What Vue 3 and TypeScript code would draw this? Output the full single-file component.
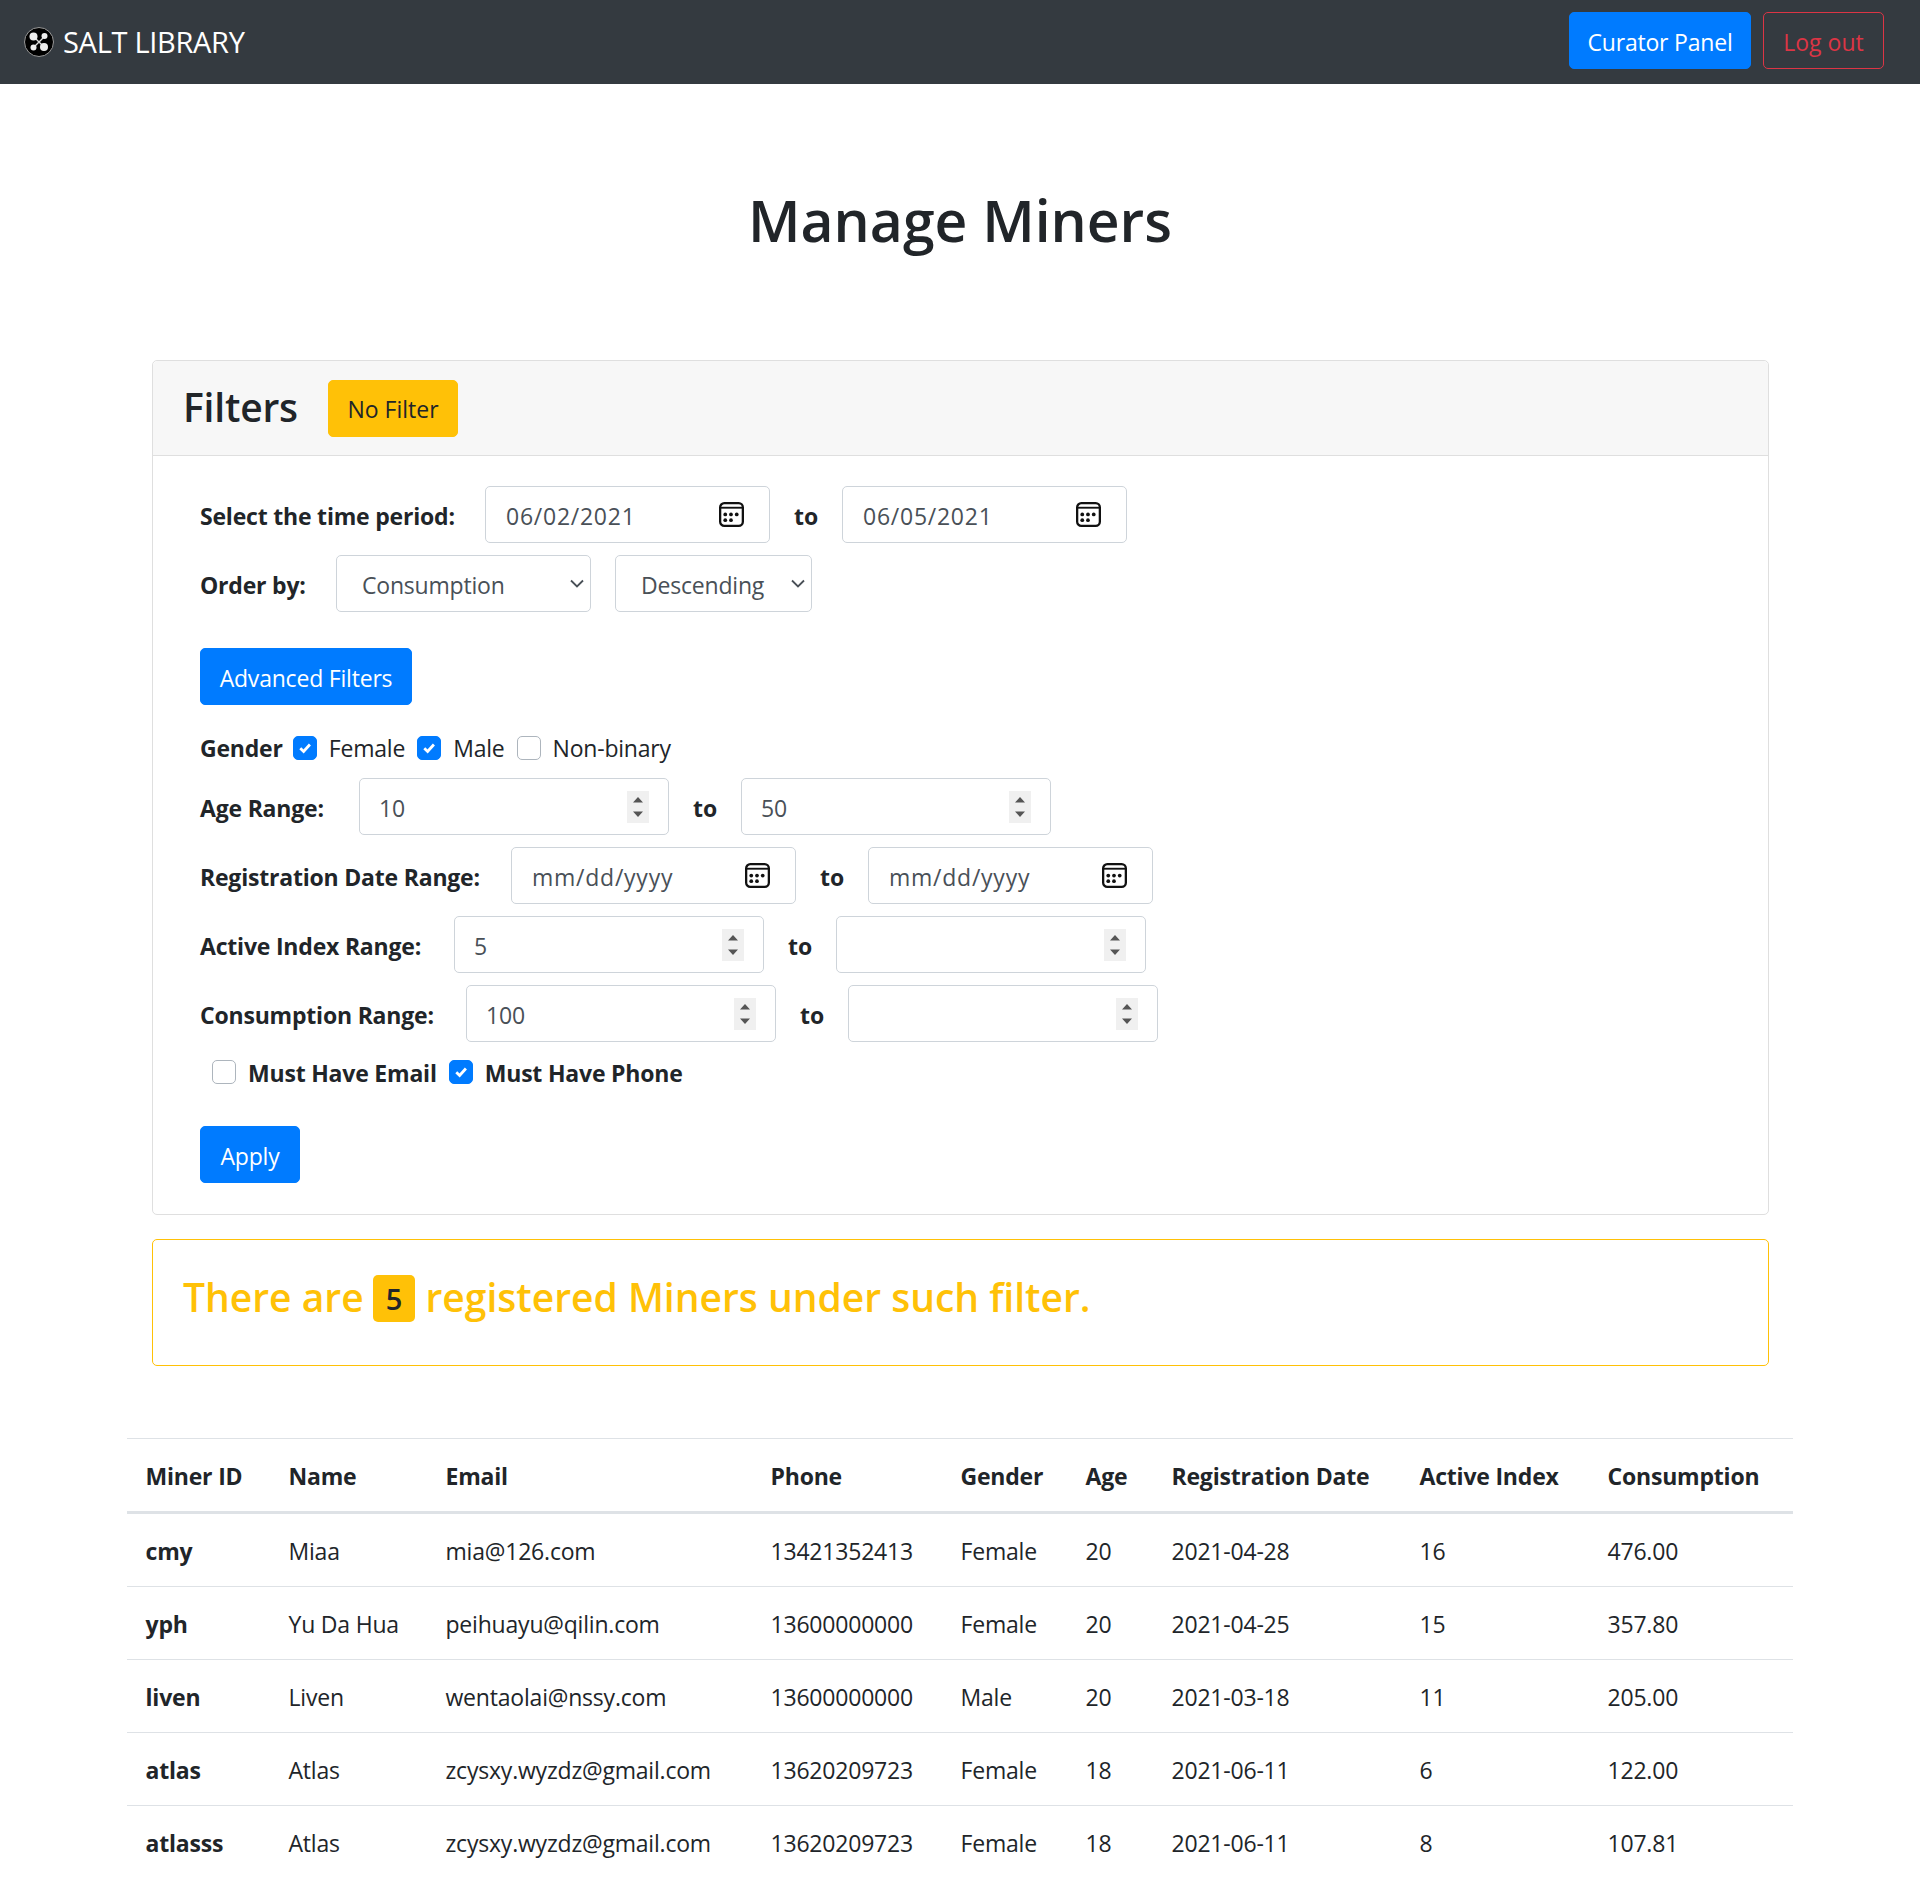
<script setup lang="ts">
interface Miner { id: string; name: string; email: string; phone: string; gender: string; age: number; date: string; active: number; consumption: string }
const miners: Miner[] = [
  { id: 'cmy', name: 'Miaa', email: 'mia@126.com', phone: '13421352413', gender: 'Female', age: 20, date: '2021-04-28', active: 16, consumption: '476.00' },
  { id: 'yph', name: 'Yu Da Hua', email: 'peihuayu@qilin.com', phone: '13600000000', gender: 'Female', age: 20, date: '2021-04-25', active: 15, consumption: '357.80' },
  { id: 'liven', name: 'Liven', email: 'wentaolai@nssy.com', phone: '13600000000', gender: 'Male', age: 20, date: '2021-03-18', active: 11, consumption: '205.00' },
  { id: 'atlas', name: 'Atlas', email: 'zcysxy.wyzdz@gmail.com', phone: '13620209723', gender: 'Female', age: 18, date: '2021-06-11', active: 6, consumption: '122.00' },
  { id: 'atlasss', name: 'Atlas', email: 'zcysxy.wyzdz@gmail.com', phone: '13620209723', gender: 'Female', age: 18, date: '2021-06-11', active: 8, consumption: '107.81' },
]
const headers = ['Miner ID', 'Name', 'Email', 'Phone', 'Gender', 'Age', 'Registration Date', 'Active Index', 'Consumption']
const colWidths = [143, 157, 325, 190, 125, 86, 248, 188, 204]
const rangesBeforeDate = [{ label: 'Age Range:', width: 135, from: '10', to: '50' }]
const rangesAfterDate = [
  { label: 'Active Index Range:', width: 230, from: '5', to: '' },
  { label: 'Consumption Range:', width: 242, from: '100', to: '' },
]
</script>

<template>
  <div class="page">
    <svg class="defs" width="0" height="0" aria-hidden="true">
      <symbol id="cal" viewBox="0 0 24 24">
        <rect x="1.1" y="1.1" width="21.8" height="21.8" rx="4" fill="none" stroke="#111" stroke-width="2.2" />
        <path d="M1 5.5H23" stroke="#111" stroke-width="1.8" />
        <g fill="#111">
          <circle cx="6" cy="12" r="1.8" /><circle cx="11.5" cy="12" r="1.8" /><circle cx="17" cy="12" r="1.8" />
          <circle cx="6" cy="17.5" r="1.8" /><circle cx="11.5" cy="17.5" r="1.8" />
        </g>
      </symbol>
      <symbol id="spin" viewBox="0 0 22 32">
        <rect width="22" height="32" fill="#f0f0f0" />
        <path d="M6 11.5L11 6L16 11.5Z M6 20.5L11 26L16 20.5Z" fill="#555" />
      </symbol>
      <symbol id="chev" viewBox="0 0 14 9">
        <path d="M1 1.5L7 7.5L13 1.5" fill="none" stroke="#495057" stroke-width="1.8" />
      </symbol>
      <symbol id="tick" viewBox="0 0 8 8">
        <path d="M1.3 4.2L3.2 6L6.8 2" fill="none" stroke="#fff" stroke-width="1.6" />
      </symbol>
    </svg>

    <nav class="navbar">
      <a class="brand">
        <svg class="logo" viewBox="0 0 30 30" width="30" height="30">
          <circle cx="15" cy="15" r="14.5" fill="#000" stroke="#999" stroke-width="1" />
          <path d="M9 9 L21 21 M21 9 L9 21" stroke="#ddd" stroke-width="1.4" />
          <circle cx="9.5" cy="9.5" r="4" fill="#eee" />
          <circle cx="20.5" cy="9" r="3" fill="#eee" />
          <circle cx="9.5" cy="20.5" r="3" fill="#eee" />
          <circle cx="20" cy="20" r="4" fill="#eee" />
        </svg>
        <span>SALT LIBRARY</span>
      </a>
      <div class="nav-actions">
        <button class="btn primary curator">Curator Panel</button>
        <button class="btn outline-danger logout">Log out</button>
      </div>
    </nav>

    <h1 class="title">Manage Miners</h1>

    <main class="container">
      <section class="card">
        <header class="card-header">
          <h2>Filters</h2>
          <button class="btn warning nofilter">No Filter</button>
        </header>
        <div class="card-body">
          <div class="row">
            <strong :style="{ width: '261px' }">Select the time period:</strong>
            <div class="field date">
              <span>06/02/2021</span>
              <svg class="cal" width="25" height="25"><use href="#cal" /></svg>
            </div>
            <strong class="to">to</strong>
            <div class="field date">
              <span>06/05/2021</span>
              <svg class="cal" width="25" height="25"><use href="#cal" /></svg>
            </div>
          </div>

          <div class="row">
            <strong :style="{ width: '112px' }">Order by:</strong>
            <div class="field select consumption">
              <span>Consumption</span>
              <svg class="chev" width="14" height="9"><use href="#chev" /></svg>
            </div>
            <div class="field select descending">
              <span>Descending</span>
              <svg class="chev" width="14" height="9"><use href="#chev" /></svg>
            </div>
          </div>

          <button class="btn primary adv">Advanced Filters</button>

          <div class="check-row gender">
            <strong>Gender</strong>
            <label class="check"><i class="box on"><svg width="14" height="14"><use href="#tick" /></svg></i>Female</label>
            <label class="check"><i class="box on"><svg width="14" height="14"><use href="#tick" /></svg></i>Male</label>
            <label class="check"><i class="box"></i>Non-binary</label>
          </div>

          <div v-for="r in rangesBeforeDate" :key="r.label" class="row">
            <strong :style="{ width: r.width + 'px' }">{{ r.label }}</strong>
            <div class="field number">
              <span>{{ r.from }}</span>
              <svg class="spin" width="22" height="32"><use href="#spin" /></svg>
            </div>
            <strong class="to">to</strong>
            <div class="field number">
              <span>{{ r.to }}</span>
              <svg class="spin" width="22" height="32"><use href="#spin" /></svg>
            </div>
          </div>

          <div class="row">
            <strong :style="{ width: '287px' }">Registration Date Range:</strong>
            <div class="field date">
              <span>mm/dd/yyyy</span>
              <svg class="cal" width="25" height="25"><use href="#cal" /></svg>
            </div>
            <strong class="to">to</strong>
            <div class="field date">
              <span>mm/dd/yyyy</span>
              <svg class="cal" width="25" height="25"><use href="#cal" /></svg>
            </div>
          </div>

          <div v-for="r in rangesAfterDate" :key="r.label" class="row">
            <strong :style="{ width: r.width + 'px' }">{{ r.label }}</strong>
            <div class="field number">
              <span>{{ r.from }}</span>
              <svg class="spin" width="22" height="32"><use href="#spin" /></svg>
            </div>
            <strong class="to">to</strong>
            <div class="field number">
              <span>{{ r.to }}</span>
              <svg class="spin" width="22" height="32"><use href="#spin" /></svg>
            </div>
          </div>

          <div class="check-row must">
            <label class="check bold"><i class="box"></i>Must Have Email</label>
            <label class="check bold"><i class="box on"><svg width="14" height="14"><use href="#tick" /></svg></i>Must Have Phone</label>
          </div>

          <button class="btn primary apply">Apply</button>
        </div>
      </section>

      <section class="alert">
        <h2>There are <span class="badge">5</span> registered Miners under such filter.</h2>
      </section>
    </main>

    <div class="table-wrap">
      <table>
        <colgroup>
          <col v-for="(w, i) in colWidths" :key="i" :style="{ width: w + 'px' }" />
        </colgroup>
        <thead>
          <tr><th v-for="h in headers" :key="h">{{ h }}</th></tr>
        </thead>
        <tbody>
          <tr v-for="m in miners" :key="m.id">
            <th>{{ m.id }}</th>
            <td>{{ m.name }}</td>
            <td>{{ m.email }}</td>
            <td>{{ m.phone }}</td>
            <td>{{ m.gender }}</td>
            <td>{{ m.age }}</td>
            <td>{{ m.date }}</td>
            <td>{{ m.active }}</td>
            <td>{{ m.consumption }}</td>
          </tr>
        </tbody>
      </table>
    </div>
  </div>
</template>

<style>
body { margin: 0; background: #fff; }
</style>

<style scoped>
.page {
  font-family: "Open Sans", "Noto Sans", sans-serif;
  font-size: 23px;
  line-height: 1.5;
  color: #212529;
  min-height: 1900px;
  letter-spacing: -0.2px;
}
.defs { position: absolute; }
.navbar {
  height: 84px;
  box-sizing: border-box;
  background: #343a40;
  display: flex;
  align-items: center;
  justify-content: space-between;
  padding: 0 36px 0 24px;
}
.brand { display: flex; align-items: center; gap: 9px; color: #fff; font-size: 29px; letter-spacing: -0.3px; }
.nav-actions { display: flex; gap: 12px; margin-top: -3px; }
.btn {
  font: inherit;
  letter-spacing: inherit;
  height: 57px;
  box-sizing: border-box;
  padding: 3px 0 0;
  border: 1px solid transparent;
  border-radius: 5px;
  color: #fff;
  background: transparent;
}
.curator { width: 182px; }
.logout { width: 121px; letter-spacing: 0; }
.nofilter { width: 130px; }
.primary { background: #007bff; border-color: #007bff; }
.warning { background: #ffc107; border-color: #ffc107; color: #212529; letter-spacing: 0; }
.outline-danger { color: #dc3545; border-color: #dc3545; }
.title {
  margin: 0;
  padding-top: 102px;
  height: 276px;
  box-sizing: border-box;
  text-align: center;
  font-size: 57px;
  font-weight: 600;
  line-height: 1.2;
  letter-spacing: 0;
}
.container { padding: 0 151px 0 152px; }
.card { border: 1px solid #dfdfdf; border-radius: 5px; }
.card-header {
  height: 95px;
  box-sizing: border-box;
  display: flex;
  align-items: center;
  gap: 31px;
  padding: 0 30px;
  background: #f7f7f7;
  border-bottom: 1px solid #dfdfdf;
  border-radius: 5px 5px 0 0;
}
.card-header h2 { margin: -2px 0 0; width: 114px; font-size: 39px; font-weight: 600; letter-spacing: -0.2px; }
.card-body { padding: 30px 47px 31px; }
.row { display: flex; align-items: center; gap: 24px; height: 57px; margin-bottom: 12px; }
.row strong { font-weight: 700; padding-top: 4px; box-sizing: border-box; }
.row .to { width: 24px; letter-spacing: 0; }
.field {
  height: 57px;
  box-sizing: border-box;
  border: 1px solid #ced4da;
  border-radius: 5px;
  display: flex;
  align-items: center;
  justify-content: space-between;
  color: #495057;
  background: #fff;
}
.field span { padding-top: 4px; }
.date { width: 285px; padding: 0 25px 0 20px; }
.date span { letter-spacing: 0.75px; }
.number { width: 310px; padding: 0 19px 0 19px; }
.select { padding: 0 6px 0 25px; }
.consumption { width: 255px; }
.descending { width: 197px; }
.cal { margin-top: -1px; }
.chev { margin-top: 0; }
.adv { display: block; width: 212px; margin-top: 36px; }
.check-row { display: flex; align-items: center; height: 40px; gap: 12px; margin: 23px 0 10px; }
.gender strong { margin-right: -2px; }
.gender .box { margin-top: -1px; }
.check { display: flex; align-items: center; gap: 12px; }
.bold { font-weight: 700; }
.box {
  width: 24px;
  height: 24px;
  box-sizing: border-box;
  border: 1px solid #adb5bd;
  border-radius: 5px;
  display: flex;
  align-items: center;
  justify-content: center;
  background: #fff;
  margin-top: -3px;
}
.box.on { background: #007bff; border-color: #007bff; }
.must { padding-left: 12px; height: 50px; margin: -6px 0 0; gap: 12px; }
.apply { display: block; width: 100px; margin-top: 28px; }
.alert {
  margin-top: 24px;
  height: 127px;
  box-sizing: border-box;
  border: 1px solid #ffc107;
  border-radius: 5px;
  padding: 34px 30px 0;
}
.alert h2 { margin: 0; font-size: 39px; line-height: 1.2; font-weight: 600; color: #ffc107; letter-spacing: 0; }
.badge {
  display: inline-block;
  background: #ffc107;
  color: #212529;
  font-size: 29px;
  font-weight: 600;
  padding: 9px 13px;
  margin: 0 0 0 -1px;
  line-height: 1;
  border-radius: 5px;
  vertical-align: 2px;
}
.table-wrap { margin-top: 72px; padding: 0 127px; }
table { width: 1666px; table-layout: fixed; border-collapse: collapse; }
th, td { height: 73px; box-sizing: border-box; padding: 2px 18px 0 18.5px; text-align: left; border-top: 1px solid #dee2e6; font-weight: 400; white-space: nowrap; }
th { font-weight: 700; }
thead th { height: 74px; border-bottom: 3px solid #dee2e6; }
tbody tr:first-child th, tbody tr:first-child td { height: 74px; }
</style>
